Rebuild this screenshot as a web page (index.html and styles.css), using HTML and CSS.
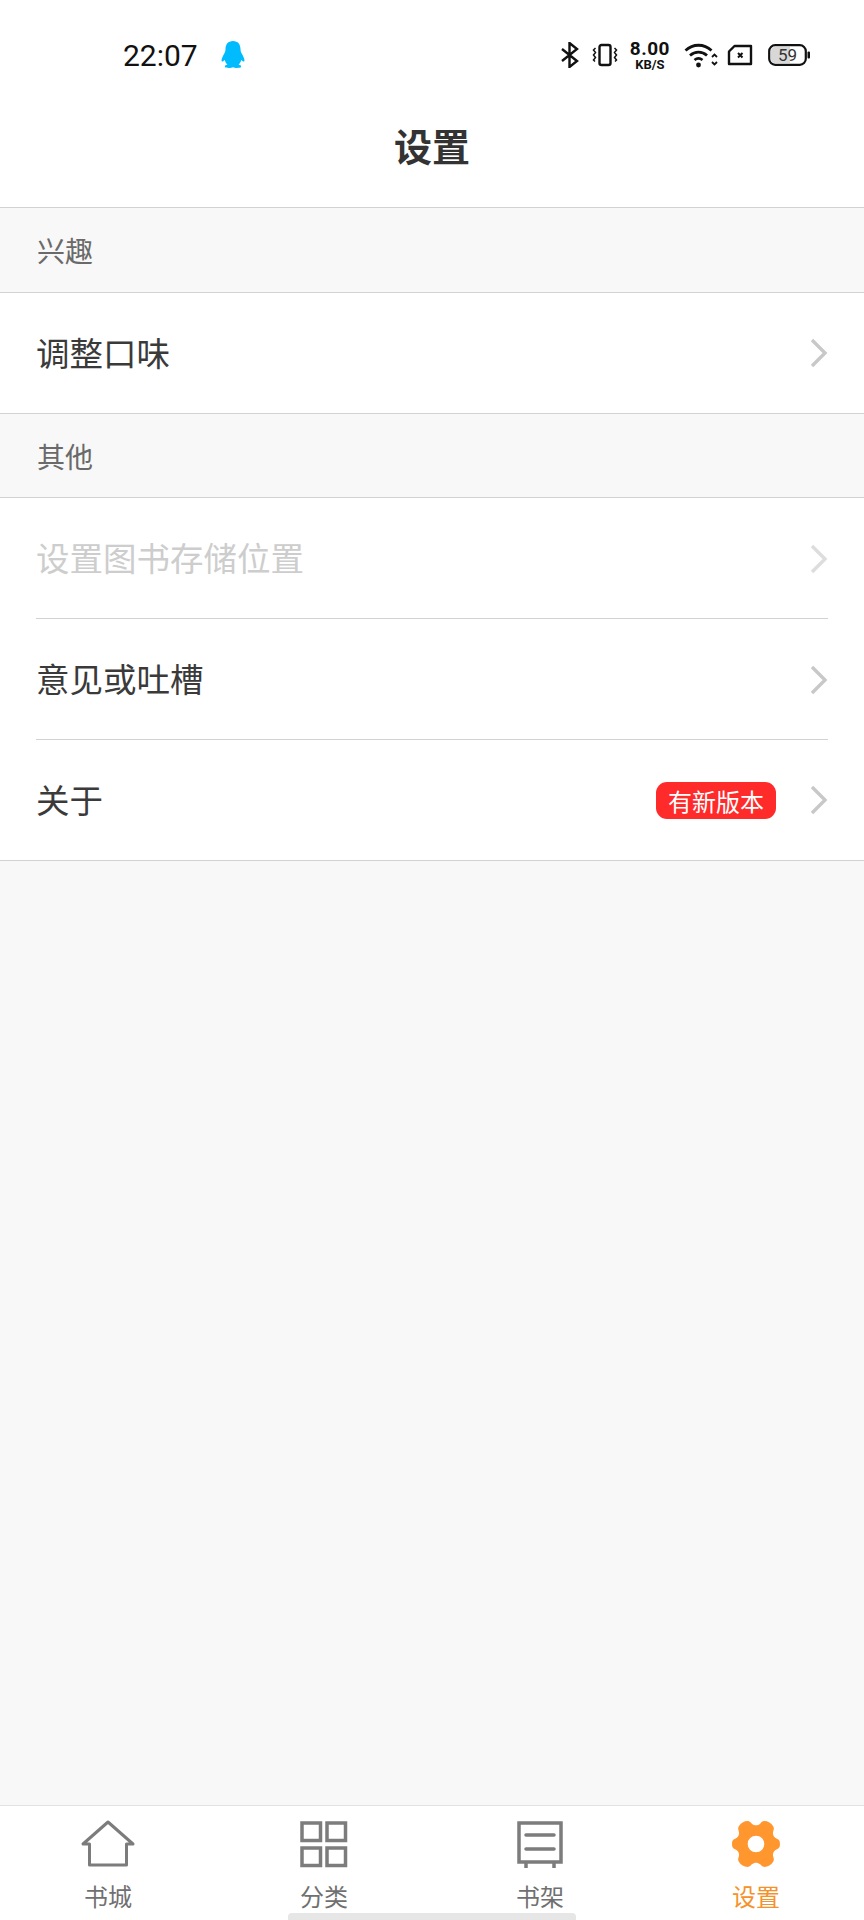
FILE: index.html
```html
<!DOCTYPE html>
<html lang="zh-CN">
<head>
    <meta charset="utf-8" />
    <meta name="viewport" content="width=device-width, initial-scale=1.0" />
    <title>设置</title>
    <link rel="stylesheet" href="styles.css">
</head>
<body>
    <div class="pagina">
        <div class="estado">
            <div class="estado_izq">
                <span class="hora">22:07</span>
                <svg class="qq" width="28" height="30" viewBox="0 0 28 30"><path fill="#00bcff" d="M14 1c-5 0-7.500 3.600-7.500 8 0 1.500-.3 2.800-1.200 4.500C4 16 2.500 18.500 2.500 20.500c0 1 .6 1.300 1.300.9l2-1.400c.5 2 1.400 3.500 2.600 4.600-1.300.5-2.600 1-2.600 2 0 1.200 2 1.400 4.200 1.400 1.500 0 3-.3 4-.8 1 .5 2.500.8 4 .8 2.200 0 4.200-.2 4.200-1.400 0-1-1.300-1.500-2.600-2 1.200-1.100 2.100-2.600 2.600-4.600l2 1.400c.7.400 1.300.1 1.300-.9 0-2-1.500-4.500-2.800-7-.9-1.700-1.200-3-1.200-4.500 0-4.400-2.500-8-7.500-8z"/></svg>
            </div>
            <div class="estado_der">
                <svg width="20" height="26" viewBox="0 0 20 26" fill="none" stroke="#111" stroke-width="2.400"><path d="M2 7l15 12-7.500 6V1L17 7 2 19"/></svg>
                <svg width="26" height="24" viewBox="0 0 26 24" fill="none" stroke="#111" stroke-width="2"><rect x="7.500" y="2" width="11" height="20" rx="2" stroke-width="2.400"/><path d="M3.500 5l-2 2 2 2.500-2 2.500 2 2.500-2 2.500 1.500 1.500M22.500 5l2 2-2 2.500 2 2.500-2 2.500 2 2.500-1.500 1.500" stroke-width="1.500"/></svg>
                <div class="velocidad"><span class="velocidad_num">8.00</span><span class="velocidad_uni">KB/S</span></div>
                <svg class="wifi" width="34" height="26" viewBox="0 0 34 26" fill="none" stroke="#111" stroke-width="2.800"><path d="M1.500 8.500c7.500-7 18.500-7 26 0M6 13.500c5-4.500 12-4.500 17 0M10.500 18c2.500-2 5.500-2 8 0"/><circle cx="14.500" cy="23" r="2.400" fill="#111" stroke="none"/><path d="M28 15l2.500-2.500L33 15M28 20l2.500 2.500L33 20" stroke-width="1.800"/></svg>
                <svg width="26" height="22" viewBox="0 0 26 22" fill="none" stroke="#111" stroke-width="2.400"><path d="M7.500 2H24v18H2V7.500z" stroke-linejoin="round"/><path d="M11 9l4.500 4.500M15.500 9L11 13.500" stroke-width="2"/></svg>
                <svg class="bat" width="42" height="24" viewBox="0 0 42 24"><rect x="1.200" y="2.200" width="36.600" height="19.600" rx="6" fill="none" stroke="#111" stroke-width="2.200"/><path d="M7 4h15v16H7a4 4 0 0 1-4-4V8a4 4 0 0 1 4-4z" fill="#d8d8d8"/><rect x="39.500" y="8.500" width="2.500" height="7" rx="1" fill="#111"/><text class="bateria" x="19.500" y="18" text-anchor="middle">59</text></svg>
            </div>
        </div>

        <header class="titulo">设置</header>

        <main class="contenido">
            <div class="seccion">兴趣</div>
            <div class="fila">
                <span class="fila_texto">调整口味</span>
                <svg class="flecha" width="18" height="30" viewBox="0 0 18 30" fill="none" stroke="#c8c8c8" stroke-width="3.400"><path d="M2 2l13 13L2 28"/></svg>
            </div>

            <div class="seccion seccion--baja">其他</div>
            <div class="fila fila--linea">
                <span class="fila_texto fila_texto--apagado">设置图书存储位置</span>
                <svg class="flecha flecha--apagada" width="18" height="30" viewBox="0 0 18 30" fill="none" stroke="#c8c8c8" stroke-width="3.400"><path d="M2 2l13 13L2 28"/></svg>
            </div>
            <div class="fila fila--linea">
                <span class="fila_texto">意见或吐槽</span>
                <svg class="flecha" width="18" height="30" viewBox="0 0 18 30" fill="none" stroke="#c8c8c8" stroke-width="3.400"><path d="M2 2l13 13L2 28"/></svg>
            </div>
            <div class="fila">
                <span class="fila_texto">关于</span>
                <span class="insignia">有新版本</span>
                <svg class="flecha" width="18" height="30" viewBox="0 0 18 30" fill="none" stroke="#c8c8c8" stroke-width="3.400"><path d="M2 2l13 13L2 28"/></svg>
            </div>
        </main>

        <nav class="pestanas">
            <div class="pestana">
                <svg width="56" height="50" viewBox="0 0 56 50" fill="none" stroke="#7c7c7c" stroke-width="3" stroke-linejoin="round"><path d="M28 3L3 25h6.500v21h37V25H53z"/></svg>
                <span>书城</span>
            </div>
            <div class="pestana">
                <svg width="56" height="50" viewBox="1 0 56 50" fill="none" stroke="#7c7c7c" stroke-width="3.500"><rect x="7" y="4" width="18.500" height="17.500"/><rect x="32" y="4" width="18.500" height="17.500"/><rect x="7" y="29" width="18.500" height="17.500"/><rect x="32" y="29" width="18.500" height="17.500"/></svg>
                <span>分类</span>
            </div>
            <div class="pestana">
                <svg width="56" height="50" viewBox="0 0 56 50" fill="none" stroke="#7c7c7c" stroke-width="3.500"><path d="M7 4h42v39H7z"/><path d="M14 16h28M14 30h28" stroke-linecap="round"/><path d="M14 43v6M42 43v6"/></svg>
                <span>书架</span>
            </div>
            <div class="pestana pestana--activa">
                <svg width="56" height="50" viewBox="2 1 52 48"><path fill="#ff962e" fill-rule="evenodd" d="M20 3c2 0 3 1.500 4 2.500 2.500 2 5.500 2 8 0C33 4.500 34 3 36 3c3.500 0 6.500 2 8.500 5 1.200 2 .4 3.700 0 5-.8 3 .6 5.800 3.500 7 1.500.6 3 1.200 3 5s-1.500 4.400-3 5c-2.900 1.200-4.300 4-3.500 7 .4 1.300 1.200 3 0 5-2 3-5 5-8.500 5-2 0-3-1.500-4-2.500-2.500-2-5.500-2-8 0-1 1-2 2.500-4 2.500-3.500 0-6.500-2-8.500-5-1.200-2-.4-3.700 0-5 .8-3-.6-5.800-3.500-7-1.500-.6-3-1.200-3-5s1.500-4.400 3-5c2.900-1.200 4.300-4 3.500-7-.4-1.300-1.200-3 0-5 2-3 5-5 8.500-5zM28 17a8 8 0 1 0 0 16 8 8 0 0 0 0-16z"/></svg>
                <span>设置</span>
            </div>
            <div class="barra_inicio"></div>
        </nav>
    </div>
</body>
</html>
```

FILE: styles.css
```css
* {
    padding: 0;
    margin: 0;
    box-sizing: border-box;
}

body {
    font-family: "Noto Sans CJK SC", "Noto Sans", sans-serif;
    background-color: #fff;
    color: #3a3a3a;
}

.pagina {
    display: flex;
    flex-direction: column;
    height: 1920px;
}

.estado {
    display: flex;
    justify-content: space-between;
    align-items: center;
    height: 110px;
    padding: 0 54px 0 123px;
}

.estado_izq {
    display: flex;
    align-items: center;
    gap: 21px;
}

.hora {
    font-family: Roboto, sans-serif;
    font-size: 30px;
    color: #111;
}

.estado_der {
    display: flex;
    align-items: center;
    gap: 12px;
}

.wifi {
    margin-left: 2px;
    margin-right: -3px;
}

.bat {
    margin-left: 3px;
}

.velocidad {
    display: flex;
    flex-direction: column;
    align-items: center;
    font-family: Roboto, sans-serif;
    font-weight: 700;
    color: #111;
    line-height: 1;
}

.velocidad_num {
    font-size: 19px;
    letter-spacing: .5px;
}

.velocidad_uni {
    font-size: 13px;
}

.bateria {
    font-family: Roboto, sans-serif;
    font-size: 17px;
    fill: #333;
}

.titulo {
    display: flex;
    justify-content: center;
    align-items: center;
    height: 98px;
    padding-bottom: 28px;
    font-size: 38px;
    font-weight: 700;
    color: #333;
    border-bottom: 1px solid #d2d2d2;
}

.contenido {
    flex: 1;
    background-color: #f8f8f8;
}

.seccion {
    display: flex;
    align-items: center;
    height: 85px;
    padding-left: 37px;
    font-size: 28px;
    color: #6a6a6a;
    border-bottom: 1px solid #d2d2d2;
}

.seccion--baja {
    height: 84px;
}

.fila {
    position: relative;
    display: flex;
    align-items: center;
    height: 121px;
    padding: 0 36px;
    background-color: #fff;
    border-bottom: 1px solid #d2d2d2;
}

.fila--linea {
    border-bottom: none;
}

.fila--linea::after {
    content: "";
    position: absolute;
    left: 36px;
    right: 36px;
    bottom: 0;
    height: 1px;
    background-color: #d2d2d2;
}

.fila_texto {
    flex: 1;
    padding-bottom: 4px;
    font-size: 33.5px;
}

.fila_texto--apagado {
    color: #cdcdcd;
}

.flecha--apagada {
    opacity: .6;
}

.insignia {
    margin-right: 34px;
    padding: 0 12px;
    height: 37px;
    line-height: 37px;
    font-size: 24px;
    color: #fff;
    background-color: #ff2a2a;
    border-radius: 11px;
}

.pestanas {
    position: relative;
    display: grid;
    grid-template-columns: repeat(4, 1fr);
    height: 115px;
    padding-top: 13px;
    background-color: #fff;
    border-top: 1px solid #e2e2e2;
}

.pestana {
    display: flex;
    flex-direction: column;
    align-items: center;
    font-size: 24px;
    line-height: 34px;
    color: #707070;
}

.pestana svg {
    margin-bottom: 10px;
}

.pestana--activa {
    color: #f5922a;
}

.barra_inicio {
    position: absolute;
    left: 288px;
    bottom: 0;
    width: 288px;
    height: 7px;
    background-color: #e6e6e6;
    border-radius: 4px 4px 0 0;
}
```
